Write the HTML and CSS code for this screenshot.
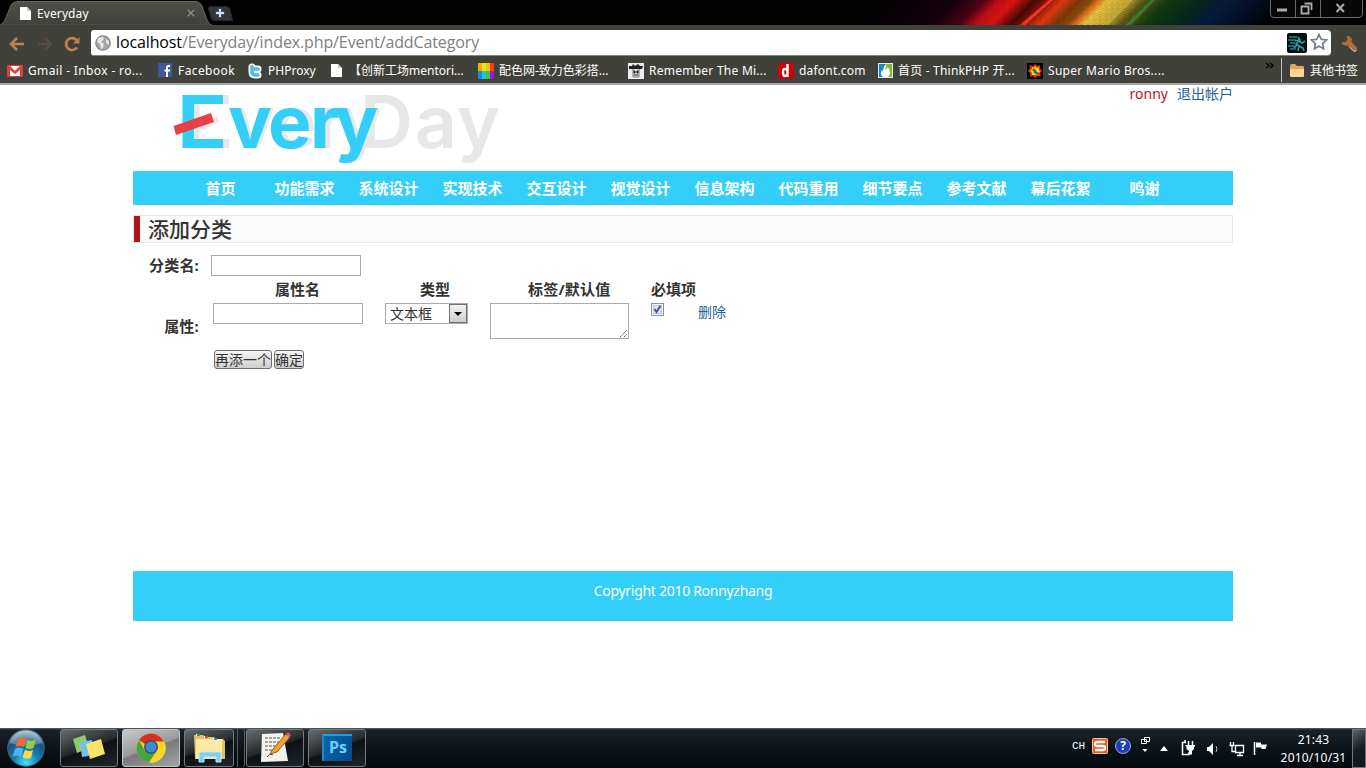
FILE: index.html
```html
<!DOCTYPE html>
<html lang="zh-CN">
<head>
<meta charset="utf-8">
<title>Everyday</title>
<link rel="stylesheet" href="styles.css">
</head>
<body>
<div class="screen">
  <header class="titlebar">
    <div class="tab">
      <svg class="tab-shape" width="212" height="25" viewBox="0 0 212 25"><defs><linearGradient id="tabg" x1="0" y1="0" x2="0" y2="1"><stop offset="0" stop-color="#4e4f48"/><stop offset="1" stop-color="#41413b"/></linearGradient></defs><path d="M0 25Q3 24 5 20L11 5Q13 1.500 18 1.500H195Q200 1.500 202 6L207 20Q209 25 212 25Z" fill="url(#tabg)" stroke="#64655e" stroke-width="1"/><path d="M0 25.500H212" stroke="#41413b" stroke-width="2"/></svg>
      <svg class="doc-icon" width="13" height="15" viewBox="0 0 13 15"><path d="M1 1H8L12 5V14H1Z" fill="#fff"/><path d="M8 1V5H12Z" fill="#c8c8c8"/></svg>
      <span class="tab-title">Everyday</span>
      <svg class="tab-close" width="8" height="8" viewBox="0 0 8 8"><path d="M.8 .8L7.200 7.200M7.200 .8L.8 7.200" stroke="#8d8e88" stroke-width="1.300"/></svg>
    </div>
    <svg class="newtab" width="25" height="15" viewBox="0 0 25 15"><path d="M2 .5H18Q21 .5 22 3L24.500 14.500H7Q4 14.500 3 12L.5 3Q0 .5 2 .5Z" fill="#343538" stroke="#24252a"/><path d="M12 2.500V11.500M7.500 7H16.500" stroke="#3c5078" stroke-width="4"/><path d="M12 3V11M8 7H16" stroke="#d9dde5" stroke-width="2"/></svg>
    <svg class="aurora" width="410" height="25" viewBox="0 0 410 25"><defs><linearGradient id="rainbow" x1="0" y1="0" x2="1" y2="0"><stop offset="0" stop-color="#020203"/><stop offset=".17" stop-color="#14000c"/><stop offset=".24" stop-color="#4a0314"/><stop offset=".28" stop-color="#c00c14"/><stop offset=".32" stop-color="#e01412"/><stop offset=".37" stop-color="#4a0806"/><stop offset=".4" stop-color="#8a1408"/><stop offset=".44" stop-color="#e83a10"/><stop offset=".48" stop-color="#7d3a0a"/><stop offset=".51" stop-color="#8c4a0c"/><stop offset=".525" stop-color="#e06a18"/><stop offset=".55" stop-color="#e8c440"/><stop offset=".6" stop-color="#c8ac36"/><stop offset=".64" stop-color="#5a5a16"/><stop offset=".7" stop-color="#143c10"/><stop offset=".78" stop-color="#06281c"/><stop offset=".84" stop-color="#061c3c"/><stop offset=".93" stop-color="#050c24"/><stop offset="1" stop-color="#020203"/></linearGradient><pattern id="mesh" width="6" height="5" patternUnits="userSpaceOnUse"><path d="M0 2L3 0L6 2V5L3 3L0 5Z" fill="none" stroke="#000" stroke-opacity=".15" stroke-width=".7"/></pattern></defs><g transform="translate(26 0) skewX(-45)"><rect width="404" height="25" fill="url(#rainbow)"/><path d="M163 0H167L164 25H159Z" fill="#ff3622"/><path d="M244 0H247V25H242Z" fill="#d8c040" opacity=".5"/><path d="M265 0H269L270 25H264Z" fill="#3f8a35" opacity=".8"/></g><rect width="410" height="25" fill="url(#mesh)"/></svg>
    <svg class="winctl" width="93" height="18" viewBox="0 0 93 18"><path d="M.5 0V14Q.5 17.500 4 17.500H89Q92.500 17.500 92.500 14V0M25.500 0V17M50.500 0V17" stroke="#68696a" fill="#080808"/><path d="M7 10H17" stroke="#aaa" stroke-width="3"/><path d="M34.500 3.500H41.500V10M31.500 6.500H38.500V13.500H31.500Z" fill="none" stroke="#aaa" stroke-width="1.800"/><path d="M66.500 4L74 12M74 4L66.500 12" stroke="#aaa" stroke-width="2"/></svg>
  </header>
  <div class="toolbar">
    <svg class="back" width="16" height="16" viewBox="0 0 16 16"><path d="M15 8H3M8 2L2 8L8 14" fill="none" stroke="#c0814f" stroke-width="2.500"/></svg>
    <svg class="forward" width="16" height="16" viewBox="0 0 16 16"><path d="M1 8H13M8 2L14 8L8 14" fill="none" stroke="#5a4c42" stroke-width="2.300"/></svg>
    <svg class="reload" width="17" height="16" viewBox="0 0 17 16"><path d="M12.500 4A6 6 0 1 0 13 11.500" fill="none" stroke="#c0814f" stroke-width="2.700"/><path d="M9 7.500H15.500V1Z" fill="#c0814f"/></svg>
    <div class="omnibox">
      <svg class="globe" width="16" height="16" viewBox="0 0 16 16"><circle cx="8" cy="8" r="7.200" fill="#a6a6a6" stroke="#858585" stroke-width="1.200"/><path d="M3 3L8 1.500L9 4L6 7L9 9L8 13L6 14L5 9L2 7ZM11 4L14 6V10L11 8Z" fill="#e6e6e6"/></svg>
      <span class="url"><b>localhost</b>/Everyday/index.php/Event/addCategory</span>
      <svg class="runner" width="20" height="20" viewBox="0 0 20 20"><rect width="20" height="20" rx="2" fill="#040d10"/><path d="M2 4H10M1 7H9M3 10H8M1 13H8M3 16H9" stroke="#278087" stroke-width="1.300"/><path d="M11 4L13 7L9 11L12 13L11 18M12 8L15 10L18 8M8 8L12 7M12 13L16 15L17 18M7 15L10 12" fill="none" stroke="#3a9a9e" stroke-width="1.600"/></svg>
      <svg class="star" width="18" height="18" viewBox="0 0 18 18"><path d="M9 1.500L11.200 6.300L16.500 7L12.600 10.500L13.600 15.800L9 13.200L4.400 15.800L5.400 10.500L1.500 7L6.800 6.300Z" fill="#fff" stroke="#747c92" stroke-width="1.700"/></svg>
    </div>
    <svg class="wrench" width="18" height="18" viewBox="0 0 18 18"><path d="M1.500 7.500L5.500 7L7.500 4.500L6.500 1Q11 .5 12 4.500L11.500 7L16.500 12Q18 15 14.500 16.500L8 10.500Q3.500 11.500 1.500 7.500Z" fill="#b66b3c"/><path d="M9 11.500L14 16.500L16.500 15.500" fill="none" stroke="#e2d6cc" stroke-width="1"/></svg>
  </div>
  <nav class="bookmarks">
    <a class="bm bm1"><svg width="16" height="16" viewBox="0 0 16 16"><rect y="2" width="16" height="12" rx="1" fill="#db3d39"/><path d="M3 3H13L8 8ZM3 13V7L8 11L13 7V13Z" fill="#fff"/><path d="M2 3L8 9L14 3" fill="none" stroke="#e94b44" stroke-width="1.500"/></svg><span>Gmail - Inbox - ro...</span></a>
    <a class="bm bm2"><svg width="15" height="15" viewBox="0 0 15 15"><rect width="14" height="14" fill="#3d5a9a"/><path d="M12 3H10.500Q9 3 9 5V14M6.500 7.500H12" fill="none" stroke="#fff" stroke-width="2"/></svg><span>Facebook</span></a>
    <a class="bm bm3"><svg width="15" height="16" viewBox="0 0 15 16"><path d="M4 4V9Q4 12 7 12H10M4 6H10" fill="none" stroke="#fff" stroke-width="7" stroke-linecap="round"/><path d="M4 3.500V9Q4 12 7 12H10M4 6H10" fill="none" stroke="#54b9e5" stroke-width="3.600" stroke-linecap="round"/></svg><span>PHProxy</span></a>
    <a class="bm bm4"><svg width="13" height="15" viewBox="0 0 13 15"><path d="M1 1H8L12 5V14H1Z" fill="#fff"/><path d="M8 1V5H12Z" fill="#c8c8c8"/></svg><span>【创新工场mentori...</span></a>
    <a class="bm bm5"><svg width="16" height="16" viewBox="0 0 16 16"><path d="M0 0H4V8H0Z" fill="#fca500"/><path d="M4 0H8V8H4Z" fill="#d4ee12"/><path d="M8 0H12V8H8Z" fill="#ffbd00"/><path d="M12 0H16V8H12Z" fill="#ff3b00"/><path d="M0 8H4V16H0Z" fill="#168bdb"/><path d="M4 8H8V16H4Z" fill="#24c7cd"/><path d="M8 8H12V16H8Z" fill="#43c53a"/><path d="M12 8H16V16H12Z" fill="#9317e7"/></svg><span>配色网-致力色彩搭...</span></a>
    <a class="bm bm6"><svg width="16" height="16" viewBox="0 0 16 16"><rect width="16" height="16" fill="#eee"/><path d="M1 3H4L5 1L7 3L10 1L12 3H15L14 6H11V8H5V6H1Z" fill="#222"/><path d="M5 6V14H11V6" fill="#ddd" stroke="#777"/><path d="M6 8H7V10H6ZM9 8H10V10H9ZM6 12H10" stroke="#222"/></svg><span>Remember The Mi...</span></a>
    <a class="bm bm7"><svg width="16" height="16" viewBox="0 0 16 16"><rect width="16" height="16" fill="#d0000a"/><path d="M9.500 1V14M9 7Q5 4 5 9Q5 15 9 12" fill="none" stroke="#fff" stroke-width="2.500"/></svg><span>dafont.com</span></a>
    <a class="bm bm8"><svg width="15" height="15" viewBox="0 0 15 15"><rect width="8" height="15" fill="#168bc1"/><rect x="8" width="7" height="15" fill="#7eb928"/><path d="M8 1Q9 4 7 6Q8 7 10 4Q14 10 10 14H5Q1 11 4 7L5 9Q5 4 8 1Z" fill="#fff"/><rect x=".5" y=".5" width="14" height="14" fill="none" stroke="#dceef6"/></svg><span>首页 - ThinkPHP 开...</span></a>
    <a class="bm bm9"><svg width="16" height="16" viewBox="0 0 16 16"><rect width="16" height="16" fill="#000"/><path d="M8 1L10 3L13 2L13 5L15 8L13 10L14 13L10 13L8 15L6 13L3 14L3 10L1 8L3 5L2 2L6 3Z" fill="#e33109"/><path d="M8 3L10 5L12 4L12 7L13 9L11 10L11 12H5L5 10L3 8L5 6L5 4L7 5Z" fill="#ffde12"/><path d="M6 6L8 8L8 9L11 11" fill="none" stroke="#52555b" stroke-width="2.500"/></svg><span>Super Mario Bros....</span></a>
    <svg class="more" width="9" height="8" viewBox="0 0 9 8"><path d="M1 1L4 3.500L1 6M5 1L8 3.500L5 6" fill="none" stroke="#080808" stroke-width="1.500"/></svg>
    <i class="divider"></i>
    <a class="bm others"><svg width="16" height="14" viewBox="0 0 16 14"><path d="M1 2Q1 0 3 0H6L8 2H14Q15 2 15 4V12H1Z" fill="#e0a85c"/><path d="M1 5H15V12Q15 13 14 13H2Q1 13 1 12Z" fill="#ffd794"/></svg><span>其他书签</span></a>
  </nav>

  <main class="viewport">
    <div class="page">
      <div class="head">
        <svg class="logo" width="330" height="80" viewBox="170 85 330 80">
          <g class="logo-text ghost"><text transform="translate(183 148) scale(1.14 1)">E</text><text x="231 273 315 338" y="148">very</text><text class="day" x="360 415 457" y="148">Day</text></g>
          <g class="logo-text every"><text transform="translate(177 148) scale(1.14 1)">E</text><text x="228 268 310 334.500" y="148">very</text></g>
          <path d="M194 104H200V139H194Z" fill="#e7e7e7"/>
          <path d="M199.500 104H228V139H199.500Z" fill="#fff"/>
          <path d="M194 131L217 116L219 122L194 133Z" fill="#e7e7e7"/>
          <path d="M173.500 126L211 113L214 122L176 135Z" fill="#e74145"/>
        </svg>
        <p class="account"><span>ronny</span><a>退出帐户</a></p>
      </div>
      <ul class="nav"><li>首页</li><li>功能需求</li><li>系统设计</li><li>实现技术</li><li>交互设计</li><li>视觉设计</li><li>信息架构</li><li>代码重用</li><li>细节要点</li><li>参考文献</li><li>幕后花絮</li><li>鸣谢</li></ul>
      <h1 class="heading">添加分类</h1>
      <div class="form">
        <div class="row"><label class="label">分类名:</label><span class="field name"></span></div>
        <div class="row">
          <label class="label attr-label">属性:</label>
          <div class="attrs">
            <b>属性名</b><b>类型</b><b class="defaults">标签/默认值</b><b class="required">必填项</b><b></b>
            <span class="field"></span>
            <span class="select"><span>文本框</span><i><svg width="8" height="4" viewBox="0 0 8 4"><path d="M0 0H8L4 4Z" fill="#000"/></svg></i></span>
            <span class="area"><svg width="9" height="9" viewBox="0 0 9 9"><path d="M1 8L8 1M5 8L8 5" stroke="#666" stroke-width="1" stroke-dasharray="1.500 .5"/></svg></span>
            <svg class="check" width="13" height="13" viewBox="0 0 13 13"><rect x=".5" y=".5" width="12" height="12" fill="#f4f5f6" stroke="#909497"/><rect x="2.500" y="2.500" width="8" height="8" fill="#dfe3eb" stroke="#c2c7d0"/><path d="M3.500 6L5.500 9L9.500 2.800" fill="none" stroke="#4055a0" stroke-width="2"/></svg>
            <a class="delete">删除</a>
            <div class="buttons"><span class="btn add">再添一个</span><span class="btn ok">确定</span></div>
          </div>
        </div>
      </div>
      <footer class="footer"><span>Copyright 2010 Ronnyzhang</span></footer>
    </div>
  </main>

  <div class="taskbar">
    <svg class="orb" width="40" height="40" viewBox="0 0 40 40"><defs><radialGradient id="orb" cx=".5" cy=".9" r=".85"><stop offset="0" stop-color="#45e2ff"/><stop offset=".4" stop-color="#147eb2"/><stop offset=".75" stop-color="#1d5279"/><stop offset="1" stop-color="#8eb0c4"/></radialGradient></defs><circle cx="21" cy="20" r="18.300" fill="url(#orb)" stroke="#3f6278"/><path d="M5 15Q9 3 21 3T37 15Q21 20 5 15Z" fill="#fff" opacity=".28"/><path d="M13 11Q17 8 21 11L19 19Q15 17 10.500 19Z" fill="#f26b2c"/><path d="M22.500 12Q27 14 31 11.500L28.500 20Q25 22 20.500 20Z" fill="#95ce3d"/><path d="M10 21Q14 18 18.500 21L16 29Q12 26 7.500 29Z" fill="#4db5ef"/><path d="M20 22Q25 24 28 22L26 30Q21 32 17.500 29Z" fill="#ffd74b"/></svg>
    <div class="task t1"><svg width="34" height="28" viewBox="0 0 34 28"><path d="M1 5L13 1L17 14L5 19Z" fill="#8bce67"/><path d="M8 8L20 6L22 21L10 23Z" fill="#79bdf0"/><path d="M14 10L29 5L33 20L18 25Z" fill="#fae36a"/></svg></div>
    <div class="task t2"><svg width="32" height="32" viewBox="0 0 32 32"><circle cx="16" cy="16" r="14.500" fill="#f6d328"/><path d="M16 16L4 8A14.500 14.500 0 0 1 29 9.500Z" fill="#dc2d25"/><path d="M4 8A14.500 14.500 0 0 0 14 30.500L21 20L10 19Z" fill="#49a440"/><path d="M16 9.500H29A14.500 14.500 0 0 1 14 30.500L22 20Z" fill="#f9d829"/><circle cx="16" cy="15" r="7" fill="#444f58"/><circle cx="16" cy="15" r="5.500" fill="#3b8ad6"/></svg></div>
    <div class="task t3"><svg width="34" height="32" viewBox="0 0 34 32"><path d="M2 3H11L13 5H22L24 7H31L33 9V27H3Z" fill="#e4bf68"/><path d="M4 7H30V27H4Z" fill="#ffeaa2"/><path d="M4 2H8V4H4ZM12 4H16V6H12ZM21 6H25V8H21Z" fill="#fff"/><path d="M5 2H8V4H5Z" fill="#22a93b"/><path d="M13 4H16V6H13Z" fill="#df4030"/><path d="M22 6H25V8H22Z" fill="#248bdf"/><path d="M7 30V20H29V30H24V25H12V30Z" fill="#82cdf0" stroke="#b7efff"/></svg></div>
    <div class="stack"></div>
    <div class="task t4"><svg width="34" height="34" viewBox="0 0 34 34"><path d="M4 3L25 2L30 30L3 31Z" fill="#f3f3ee"/><path d="M7 7H23M7 11H21M7 15H20M7 19H17" stroke="#888" stroke-width="1.500" stroke-dasharray="3 1"/><path d="M12 23L15 18L28 3L32 6L19 21Z" fill="#f5a42b" stroke="#9b611d"/><path d="M28 3L30 1L33 4L31 7Z" fill="#d65863"/><path d="M9 26L12 23L15 24" stroke="#444" fill="none"/></svg></div>
    <div class="task t5"><div class="ps">Ps</div></div>
    <div class="tray">
      <span class="lang">CH</span>
      <svg class="sogou" width="16" height="16" viewBox="0 0 16 16"><rect x=".5" y=".5" width="15" height="15" rx="1" fill="#ed5a1c" stroke="#f4c0a4"/><path d="M13 4H5Q3 4 3 6T5 8H11Q13 8 13 10T11 12H3" fill="none" stroke="#fff" stroke-width="2.300"/></svg>
      <span class="help">?</span>
      <svg class="ime" width="9" height="18" viewBox="0 0 9 18"><path d="M3.500 1.500H8.500V5.500H3.500ZM.5 3.500H5.500V7.500H.5Z" fill="#091015" stroke="#fff"/><path d="M1.500 13H6.500L4 16Z" fill="#fff"/></svg>
      <svg class="up" width="8" height="5" viewBox="0 0 8 5"><path d="M0 5L4 0L8 5Z" fill="#fff"/></svg>
      <svg class="power" width="15" height="16" viewBox="0 0 15 16"><path d="M5 2.500H1.500V14.500H8V12" fill="none" stroke="#fff" stroke-width="1.500"/><path d="M3 1H5M7.500 1V5M11.500 1V5" stroke="#fff" stroke-width="1.500"/><path d="M4.500 5H14V6.500H13V9L11 11V14.500H8V11L5.500 9V6.500H4.500Z" fill="#fff"/></svg>
      <svg class="sound" width="14" height="14" viewBox="0 0 14 14"><path d="M1 5H3L7 1V13L3 9H1Z" fill="#fff"/><path d="M10 4Q12 7 10 10" stroke="#bbb" fill="none"/></svg>
      <svg class="net" width="16" height="15" viewBox="0 0 16 15"><path d="M6.500 3.500H14.500V10.500H6.500ZM8 13.500H14M11 11V13M1.500 0V3M4.500 0V3M.5 3.500H5.500M3 4V9.500H6" fill="none" stroke="#fff" stroke-width="1.300"/></svg>
      <svg class="flag" width="15" height="14" viewBox="0 0 15 14"><path d="M1.500 1V14" stroke="#fff" stroke-width="1.500"/><path d="M3 1.500H8V3.500H14L12.500 8H8.500V6.500H3Z" fill="#fff"/></svg>
      <div class="clock"><span>21:43</span><span>2010/10/31</span></div>
      <div class="show"></div>
    </div>
  </div>
</div>
</body>
</html>
```
FILE: styles.css
```css
* { box-sizing: border-box; }
body { margin: 0; background: #fff; font-family: "Noto Sans", "Noto Sans CJK SC", sans-serif; }
svg { display: block; flex: none; }
span, a { white-space: nowrap; }
.screen { width: 1366px; height: 768px; display: flex; flex-direction: column; overflow: hidden; }

.titlebar { height: 25px; flex: none; background: #020203; display: flex; align-items: flex-start; }
.tab { width: 208px; height: 25px; display: flex; position: relative; padding-left: 19px; flex: none; }
.tab-shape { position: absolute; left: 0; top: 0; }
.doc-icon { position: relative; margin-top: 6px; }
.tab-title { position: relative; margin: 5px 0 0 5px; width: 150px; font-size: 12px; letter-spacing: .1px; line-height: 17px; color: #fff; }
.tab-close { position: relative; margin-top: 9px; }
.newtab { margin-top: 6px; }
.aurora { margin-left: 627px; }

.toolbar { height: 32px; flex: none; background: #41413b; display: flex; padding: 5px 0 0 9px; }
.back, .forward, .reload { margin-top: 6px; }
.forward { margin-left: 12px; }
.reload { margin-left: 11px; }
.omnibox { width: 1240px; height: 26px; margin-left: 10px; background: #fff; border-radius: 3px 4px 4px 3px; border-bottom: 1px solid #85867e; display: flex; padding-left: 5px; }
.globe { margin-top: 5px; margin-left: -1px; }
.url { width: 1171px; margin-left: 5px; font-family: "Open Sans", sans-serif; font-size: 16px; letter-spacing: -.12px; line-height: 25px; color: #808080; }
.url b { font-weight: 400; color: #000; }
.runner { margin-top: 3px; }
.star { margin: 3px 0 0 3px; }
.wrench { margin: 5px 0 0 9px; }

.bookmarks { height: 28px; flex: none; background: #41413b; border-bottom: 2px solid #a6a6a3; display: flex; align-items: center; padding-left: 7px; color: #fff; font-size: 12px; line-height: 20px; }
.bm { display: flex; align-items: center; gap: 5px; height: 26px; flex: none; padding-top: 1px; }
.bm1 { width: 151px; letter-spacing: .36px; }
.bm2 { width: 90px; letter-spacing: .4px; }
.bm3 { width: 82px; }
.bm4 { width: 148px; gap: 6px; }
.bm5 { width: 150px; }
.bm6 { width: 150px; letter-spacing: .25px; }
.bm7 { width: 100px; letter-spacing: .2px; }
.bm8 { width: 149px; letter-spacing: .2px; }
.bm9 { width: 238px; letter-spacing: .3px; }
.more { margin-bottom: 9px; }
.divider { width: 1px; height: 24px; margin-left: 7px; background: #bcbcb8; }
.others { margin-left: 7px; }

.viewport { height: 643px; flex: none; background: #fff; }
.page { width: 1100px; margin-left: 133px; color: #333; }
.head { height: 86px; display: flex; justify-content: space-between; padding-left: 37px; }
.logo { overflow: visible; }
.logo-text { font: 700 73px Inter, "Liberation Sans", sans-serif; }
.day { font-weight: 600; }
.ghost { fill: #e7e7e7; }
.every { fill: #34cff8; }
.account { margin: 0; display: flex; gap: 9px; font-size: 14px; line-height: 17px; color: #c0141b; }
.account a, .delete { color: #1f6199; }
.nav { height: 34px; margin: 0; padding: 0 0 0 45.5px; list-style: none; display: flex; background: #34cff8; color: #fff; font-size: 15px; font-weight: 700; line-height: 34px; }
.nav li { width: 84px; text-align: center; flex: none; }
.heading { height: 28px; margin: 10px 0 0; border: 1px solid #e6e6e6; background: #fafafa; font-size: 21px; font-weight: 500; line-height: 27px; display: flex; }
.heading::before { content: ""; width: 6px; height: 26px; margin-right: 8px; background: #ae1516; }
.form { height: 316px; margin-bottom: 12px; font-size: 15px; padding-top: 12px; }
.row { display: flex; }
.label { width: 66px; height: 21px; text-align: right; font-weight: 700; line-height: 21px; letter-spacing: .2px; }
.field { display: block; width: 150px; height: 21px; border: 1px solid #a9a9ae; background: #fff; }
.name { margin-left: 12px; }
.attr-label { padding-top: 40px; }
.attrs { margin-left: 14px; display: grid; grid-template-columns: 172px 105px 161px 47px 40px; grid-template-rows: 27px 47px 20px; }
.attrs b { line-height: 26px; padding-left: 62px; }
.attrs b:nth-child(2) { padding-left: 35px; }
.attrs .defaults { padding-left: 38px; letter-spacing: .2px; }
.attrs .required { padding-left: 0; }
.select { width: 83px; height: 21px; border: 1px solid #a9a9ae; display: flex; justify-content: space-between; font-size: 14px; line-height: 20px; padding-left: 4px; }
.select i { width: 18px; height: 19px; border: 1px solid #707070; background: linear-gradient(#f3f3f3, #cfcfcf); display: flex; align-items: center; justify-content: center; }
.area { width: 139px; height: 36px; border: 1px solid #a9a9ae; display: flex; align-items: flex-end; justify-content: flex-end; }
.delete { font-size: 14px; line-height: 18px; }
.buttons { grid-column: 1 / 3; display: flex; gap: 2px; padding-left: 1px; }
.btn { height: 19px; border: 1px solid #707070; border-radius: 3px; background: linear-gradient(#f5f5f5, #cfcfcf); font-size: 14px; line-height: 18px; display: flex; justify-content: center; }
.add { width: 58px; }
.ok { width: 30px; }
.footer { height: 50px; background: #34cff8; color: #fff; font-size: 14px; letter-spacing: -.29px; line-height: 40px; text-align: center; }

.taskbar { height: 40px; flex: none; background: linear-gradient(#59646c 0, #1a2228 2px, #0c1319 20px, #040a0e 100%); display: flex; padding-left: 5px; }
.task { height: 38px; margin-top: 1px; border: 1px solid #76797b; border-radius: 3px; background: linear-gradient(160deg, #696c6e, #24282b 48%, #0d1114 52%, #20262b); display: flex; align-items: center; justify-content: center; flex: none; }
.t1 { width: 58px; margin-left: 15px; }
.t2 { width: 58px; margin-left: 4px; border-color: #c5c7c8; background: linear-gradient(160deg, #c8c9ca, #999b9d 48%, #77797b 52%, #a3a4a5); }
.t3 { width: 50px; margin-left: 4px; }
.stack { width: 8px; height: 38px; margin-top: 1px; border: solid #5a5e61; border-width: 0 1px; margin-left: 3px; border-radius: 0 3px 3px 0; }
.t4 { width: 58px; margin-left: 1px; }
.t5 { width: 58px; margin-left: 4px; }
.ps { width: 30px; height: 27px; background: linear-gradient(120deg, #0968af, #074785); border-top: 2px solid #1ba2dc; border-left: 2px solid #158fc9; color: #66d3ff; font: 700 16px/23px "Open Sans", sans-serif; text-align: center; margin-bottom: 2px; }
.tray { margin-left: auto; display: flex; align-items: flex-start; color: #fff; }
.lang { width: 20px; margin-top: 9px; font: 11px/18px "Liberation Mono", monospace; }
.sogou { margin-top: 10px; }
.help { width: 16px; height: 16px; margin: 10px 0 0 7px; border: 1px solid #9ba8dd; border-radius: 50%; background: #1941bd; font: 700 12px/14px "Open Sans", sans-serif; text-align: center; }
.ime { margin: 8px 0 0 10px; }
.up { margin: 18px 0 0 10px; }
.power { margin: 12px 0 0 13px; }
.sound { margin: 14px 0 0 10px; }
.net { margin: 14px 0 0 9px; }
.flag { margin: 13px 0 0 8px; }
.clock { width: 67px; margin-left: 12px; padding-top: 3px; font-size: 12px; letter-spacing: .2px; line-height: 18px; display: flex; flex-direction: column; align-items: center; }
.show { width: 14px; height: 39px; margin: 1px 0 0 5px; border: 1px solid #70777c; background: linear-gradient(145deg, #59636a, #171f25 50%, #0e1519); }
```
